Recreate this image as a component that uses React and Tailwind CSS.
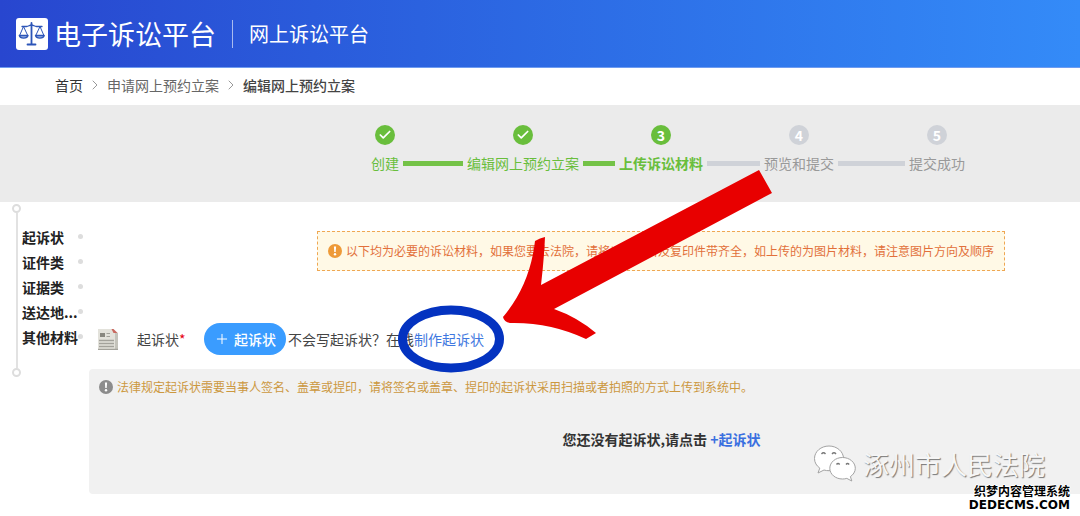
import React from 'react';
import clsx from 'clsx';
import { ChevronRight, Check, Plus } from 'lucide-react';

const steps = [
  { name: '创建', status: 'done' },
  { name: '编辑网上预约立案', status: 'done' },
  { name: '上传诉讼材料', status: 'current' },
  { name: '预览和提交', status: 'todo' },
  { name: '提交成功', status: 'todo' },
];

const categories = ['起诉状', '证件类', '证据类', '送达地...', '其他材料'];

const ScaleLogo = () => (
  <svg viewBox="0 0 32 32" className="w-8 h-8 shrink-0" aria-hidden="true">
    <rect width="32" height="32" rx="3" fill="#fff" />
    <g fill="none" stroke="#2c55b8" strokeWidth="1.3" strokeLinecap="round" strokeLinejoin="round">
      <path d="M6 8.5h4.5c2 0 3-1.5 5-1.5s3 1.5 5 1.5H26" />
      <path d="M15.500 5v21" strokeWidth="1.8" />
      <path d="M11.500 26.500h8" strokeWidth="1.800" />
      <path d="M7.500 8.500L3.800 17M7.500 8.500L11.500 17M24 8.500L20 17M24 8.500L27.700 17" strokeWidth="1" />
      <path d="M3.300 17.500h8.700a4.400 3 0 0 1-8.700 0zM19.500 17.500h8.700a4.400 3 0 0 1-8.700 0z" fill="#9fb6e6" />
    </g>
  </svg>
);

const AlertIcon = ({ className }) => (
  <svg viewBox="0 0 14 14" className={clsx('w-3.5 h-3.5 shrink-0', className)} aria-hidden="true">
    <circle cx="7" cy="7" r="7" fill="currentColor" />
    <path d="M5.900 2.600h2.200l-.4 5.400H6.300z" fill="#fff" />
    <circle cx="7" cy="10.300" r="1.200" fill="#fff" />
  </svg>
);

const DocIcon = () => (
  <svg viewBox="0 0 22 22" className="w-[22px] h-[22px] shrink-0" aria-hidden="true">
    <path d="M1 1h15l5 4v17H1z" fill="#e3e2db" />
    <path d="M18 5h3v16h-3z" fill="#c4c3bb" />
    <path d="M14.500 1h2l4 4h-4z" fill="#c9695f" />
    <path d="M3 5h5v4H3z" fill="#88877f" />
    <path d="M9.500 5.500H13M9.500 8.500H13" stroke="#a3a29b" strokeWidth="1.200" />
    <path d="M2 12.500h15M2 15.500h15M2 18.500h15M1 21.500h20" stroke="#a3a29b" strokeWidth="1.300" />
  </svg>
);

const WechatIcon = () => (
  <svg viewBox="0 0 44 40" className="w-11 h-10 shrink-0" aria-hidden="true">
    <g fill="#fff" stroke="#a3a3a3" strokeWidth="1" strokeLinejoin="round">
      <path d="M16 2C8 2 1.500 7.500 1.500 14.500c0 4 2 7.300 5.300 9.600L5 29l6-3c1.600.5 3.200.7 5 .7 8 0 14.500-5.400 14.500-12.200S24 2 16 2z" />
      <path d="M29.500 13.500c-7 0-12.700 4.800-12.700 10.800S22.500 35 29.500 35c1.500 0 3-.2 4.300-.6l5 2.600-1.400-4.400c3-2 4.900-5 4.900-8.300 0-6-5.800-10.800-12.800-10.800z" />
    </g>
    <path d="M8.500 10q2-2.500 4 0M19 10q2-2.500 4 0M23.500 20.500q1.500-2 3.200 0M33 20.500q1.500-2 3.200 0" fill="none" stroke="#777" strokeWidth="1.300" />
  </svg>
);

const Header = () => (
  <header className="h-[68px] flex items-center pl-4 text-white border-b border-[#6f9cf0] bg-linear-to-r from-[#2846cf] to-[#348bf8]">
    <ScaleLogo />
    <h1 className="ml-1.5 text-[27px] leading-9 whitespace-nowrap">电子诉讼平台</h1>
    <span className="mx-4 w-px h-7 bg-white/60" />
    <span className="text-xl leading-7 whitespace-nowrap">网上诉讼平台</span>
  </header>
);

const Breadcrumb = () => (
  <nav aria-label="面包屑" className="h-[37px] flex items-center gap-1 pl-[55px] pb-1 text-sm leading-5 text-[#666]">
    <a href="#home" className="text-[#333]">首页</a>
    <ChevronRight className="w-4 h-4 text-[#999]" strokeWidth={1.5} />
    <a href="#apply">申请网上预约立案</a>
    <ChevronRight className="w-4 h-4 text-[#999]" strokeWidth={1.5} />
    <span className="font-medium text-[#444]">编辑网上预约立案</span>
  </nav>
);

const lineColor = (status) => (status === 'todo' ? 'bg-[#cfd2d8]' : 'bg-[#74c247]');

const Steps = () => (
  <section className="h-[97px] pl-[242px] bg-[#ebebeb]">
    <ol className="grid grid-cols-5 max-w-[690px] mx-auto pt-5">
      {steps.map((step, i) => {
        const next = steps[i + 1];
        return (
          <li key={step.name} className="flex flex-col items-center gap-2">
            <span
              className={clsx(
                'w-5 h-5 rounded-full flex items-center justify-center text-white text-sm leading-5 font-bold',
                step.status === 'todo' ? 'bg-[#cfd2d8]' : 'bg-[#69be3c]'
              )}
            >
              {step.status === 'done' ? <Check className="w-3.5 h-3.5" strokeWidth={3} /> : i + 1}
            </span>
            <div className="w-full flex items-center gap-1">
              <span className={clsx('flex-1 h-[5px]', i > 0 && lineColor(step.status))} />
              <span
                className={clsx(
                  'text-sm leading-5 whitespace-nowrap',
                  step.status === 'todo' ? 'text-[#999]' : 'text-[#69be3c]',
                  step.status === 'current' && 'font-bold'
                )}
              >
                {step.name}
              </span>
              <span className={clsx('flex-1 h-[5px]', next && lineColor(next.status))} />
            </div>
          </li>
        );
      })}
    </ol>
  </section>
);

const Sidebar = () => (
  <aside className="w-[89px] shrink-0 pt-0.5 pl-3">
    <div className="flex">
      {/* Garis vertikal */}
      <div className="flex flex-col items-center w-[9px]">
        <span className="w-[9px] h-[9px] rounded-full border-2 border-[#ddd]" />
        <span className="flex-1 w-0.5 bg-[#e2e2e2]" />
        <span className="w-[9px] h-[9px] rounded-full border-2 border-[#ddd]" />
      </div>
      <ul className="pt-5 pb-7 text-sm font-bold text-[#222]">
        {categories.map((name) => (
          <li key={name} className="flex items-center h-[25px]">
            <a href="#category" className="w-14 ml-px whitespace-nowrap">{name}</a>
            <span className="w-[5px] h-[5px] rounded-full bg-[#ddd]" />
          </li>
        ))}
      </ul>
    </div>
  </aside>
);

const Notice = () => (
  <div className="flex justify-center pl-[153px]">
    <p className="flex items-center gap-1 h-10 px-2.5 border border-dashed border-[#efa752] bg-[#fff9e6] text-xs text-[#e2703a] whitespace-nowrap">
      <AlertIcon className="text-[#ee9a38]" />
      以下均为必要的诉讼材料，如果您要去法院，请将以上材料及复印件带齐全，如上传的为图片材料，请注意图片方向及顺序
    </p>
  </div>
);

const UploadRow = () => (
  <div className="flex items-center h-8 mt-[52px] pl-2 text-sm leading-5 text-[#444] whitespace-nowrap">
    <DocIcon />
    <span className="w-[67px] ml-[18px]">
      起诉状<span className="text-[#e60012]">*</span>
    </span>
    <button type="button" className="flex items-center gap-1 h-8 px-2.5 rounded-full bg-[#3a9cff] text-white font-medium">
      <Plus className="w-4 h-4" strokeWidth={1.5} />
      起诉状
    </button>
    <span className="ml-0.5">不会写起诉状？在线</span>
    <span className="relative">
      <a href="#compose" className="text-[#3f78e0]">制作起诉状</a>
      <svg viewBox="0 0 108 70" className="absolute -left-4 -top-6 w-[108px] h-[70px] max-w-none pointer-events-none" aria-hidden="true">
        <ellipse cx="53" cy="34" rx="48.500" ry="29" fill="none" stroke="#0433c0" strokeWidth="9" />
      </svg>
    </span>
  </div>
);

const EmptyPanel = () => (
  <section className="h-[125px] mt-3.5 pt-2 pl-2.5 rounded-l-sm bg-[#f1f1f1] whitespace-nowrap">
    <p className="flex items-center gap-1 text-xs leading-5 text-[#cc983f]">
      <AlertIcon className="text-[#8c8c8c]" />
      法律规定起诉状需要当事人签名、盖章或捏印，请将签名或盖章、捏印的起诉状采用扫描或者拍照的方式上传到系统中。
    </p>
    <p className="mt-[30px] pl-36 text-center text-sm leading-6 font-bold text-[#333]">
      您还没有起诉状,请点击 <a href="#add" className="text-[#3a6fe0]">+起诉状</a>
    </p>
  </section>
);

const Watermark = () => (
  <div className="absolute right-2.5 bottom-1 flex flex-col items-end whitespace-nowrap">
    <div className="flex items-center gap-1.5 mr-[25px] text-[26px] leading-7 text-[#f6f6f6] [text-shadow:1px_1px_1px_#777]">
      <WechatIcon />
      涿州市人民法院
    </div>
    <div className="text-right font-bold text-xs leading-[14px] text-black [text-shadow:1px_0_#fff,-1px_0_#fff,0_1px_#fff,0_-1px_#fff]">
      <p>织梦内容管理系统</p>
      <p className="font-['DejaVu_Sans']">DEDECMS.COM</p>
    </div>
  </div>
);

const Arrow = () => (
  <svg viewBox="0 0 270 170" className="absolute left-[502px] top-[170px] w-[270px] h-[170px] pointer-events-none" aria-hidden="true">
    <path
      d="M257 0L270 23L52 139Q75 147 94 163L84 169Q48 152 8 153Q2 152 1 147Q28 115 33 71Q38 68 43 67Q42 90 39 115Z"
      fill="#e80000"
    />
  </svg>
);

const App = () => {
  return (
    <div className="relative min-h-screen overflow-hidden bg-white font-['Noto_Sans_CJK_SC',sans-serif]">
      <Header />
      <Breadcrumb />
      <Steps />
      <div className="flex">
        <Sidebar />
        <main className="flex-1 min-w-0 pt-[29px]">
          <Notice />
          <UploadRow />
          <EmptyPanel />
        </main>
      </div>
      <Arrow />
      <Watermark />
    </div>
  );
};

export default App;
